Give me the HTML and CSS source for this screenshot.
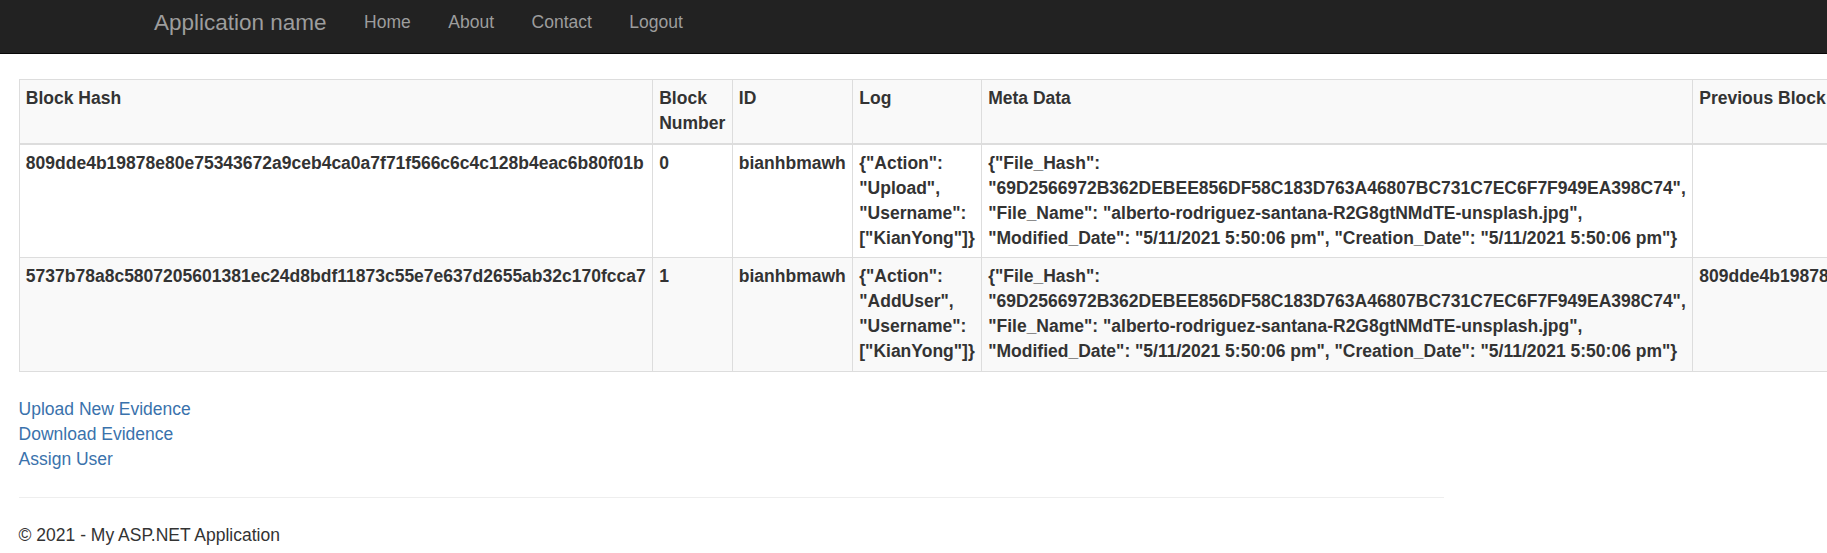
FILE: index.html
```html
<!DOCTYPE html>
<html lang="en">
<head>
<meta charset="utf-8">
<title>Index - My ASP.NET Application</title>
<link rel="stylesheet" href="styles.css">
</head>
<body>
<header class="navbar">
  <div class="navbar-inner">
    <a class="brand" href="#">Application name</a>
    <ul class="nav">
      <li><a href="#">Home</a></li>
      <li><a href="#">About</a></li>
      <li><a href="#">Contact</a></li>
      <li><a href="#">Logout</a></li>
    </ul>
  </div>
</header>
<main class="body-content">
  <table class="chain">
    <thead>
      <tr>
        <th>Block Hash</th>
        <th>Block Number</th>
        <th>ID</th>
        <th>Log</th>
        <th>Meta Data</th>
        <th>Previous Block Hash</th>
        <th>Timestamp</th>
      </tr>
    </thead>
    <tbody>
      <tr>
        <td>809dde4b19878e80e75343672a9ceb4ca0a7f71f566c6c4c128b4eac6b80f01b</td>
        <td>0</td>
        <td>bianhbmawh</td>
        <td>{"Action": "Upload", "Username": ["KianYong"]}</td>
        <td>{"File_Hash": "69D2566972B362DEBEE856DF58C183D763A46807BC731C7EC6F7F949EA398C74", "File_Name": "alberto-rodriguez-santana-R2G8gtNMdTE-unsplash.jpg", "Modified_Date": "5/11/2021 5:50:06 pm", "Creation_Date": "5/11/2021 5:50:06 pm"}</td>
        <td></td>
        <td>5/11/2021 5:50:06 pm</td>
      </tr>
      <tr>
        <td>5737b78a8c5807205601381ec24d8bdf11873c55e7e637d2655ab32c170fcca7</td>
        <td>1</td>
        <td>bianhbmawh</td>
        <td>{"Action": "AddUser", "Username": ["KianYong"]}</td>
        <td>{"File_Hash": "69D2566972B362DEBEE856DF58C183D763A46807BC731C7EC6F7F949EA398C74", "File_Name": "alberto-rodriguez-santana-R2G8gtNMdTE-unsplash.jpg", "Modified_Date": "5/11/2021 5:50:06 pm", "Creation_Date": "5/11/2021 5:50:06 pm"}</td>
        <td>809dde4b19878e80e75343672a9ceb4ca0a7f71f566c6c4c128b4eac6b80f01b</td>
        <td>5/11/2021 5:52:10 pm</td>
      </tr>
    </tbody>
  </table>
  <div class="actions">
    <a href="#">Upload New Evidence</a>
    <a href="#">Download Evidence</a>
    <a href="#">Assign User</a>
  </div>
  <hr class="rule">
  <footer class="page-footer">
    <p>&copy; 2021 - My ASP.NET Application</p>
  </footer>
</main>
</body>
</html>
```

FILE: styles.css
```css
html, body {
  margin: 0;
  padding: 0;
  overflow: hidden;
}

body {
  width: 1827px;
  height: 553px;
  font-family: "Liberation Sans", Arial, Helvetica, sans-serif;
  font-size: 17.5px;
  line-height: 25px;
  color: #333;
  background: #fff;
}

.navbar {
  background: #222;
  border-bottom: 1px solid #080808;
  height: 53px;
}

.navbar-inner {
  display: flex;
  align-items: flex-start;
  padding: 10px 0 0 154px;
}

.brand {
  font-size: 22.5px;
  line-height: 25px;
  color: #9d9d9d;
  text-decoration: none;
  margin-right: 18.75px;
}

.nav {
  display: flex;
  list-style: none;
  margin: 0;
  padding: 0;
}

.nav a {
  display: block;
  padding: 0 18.75px;
  line-height: 25px;
  color: #9d9d9d;
  text-decoration: none;
}

.body-content {
  padding: 25px 0 0 18.6px;
}

.chain {
  border-collapse: collapse;
  width: 1px;
  margin-bottom: 25px;
  border: 1px solid #ddd;
}

.chain th,
.chain td {
  border: 1px solid #ddd;
  padding: 6.25px;
  vertical-align: top;
  text-align: left;
  font-weight: bold;
  line-height: 25px;
}

.chain thead th {
  border-bottom: 2px solid #ddd;
}

.chain thead tr {
  background: #f9f9f9;
}

.chain tbody tr:nth-child(even) {
  background: #f9f9f9;
}

.actions a {
  display: block;
  color: #3a72ac;
  text-decoration: none;
}

.rule {
  width: 1425px;
  margin: 25px 0;
  border: 0;
  border-top: 1px solid #eee;
  height: 0;
}

.page-footer p {
  margin: 0 0 12.5px;
}
```
